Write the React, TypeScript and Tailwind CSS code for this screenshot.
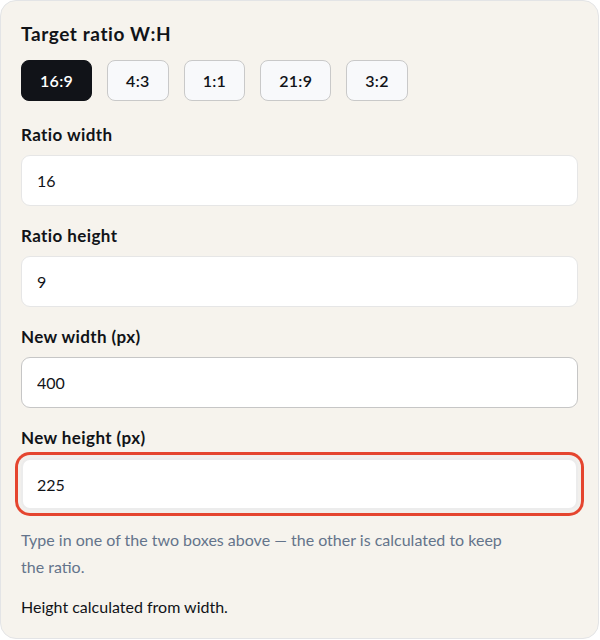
import React, { useState } from 'react';

const ratios = [
  { label: '16:9', w: 16, h: 9 },
  { label: '4:3', w: 4, h: 3 },
  { label: '1:1', w: 1, h: 1 },
  { label: '21:9', w: 21, h: 9 },
  { label: '3:2', w: 3, h: 2 },
];

export default function App() {
  const [active, setActive] = useState('16:9');
  const [rw, setRw] = useState('16');
  const [rh, setRh] = useState('9');
  const [width, setWidth] = useState('400');
  const [height, setHeight] = useState('225');

  const pick = (r: { label: string; w: number; h: number }) => {
    setActive(r.label);
    setRw(String(r.w));
    setRh(String(r.h));
    const w = parseFloat(width);
    if (!isNaN(w)) setHeight(String(Math.round((w * r.h) / r.w)));
  };

  const labelCls = 'block text-[17px] font-bold tracking-[0.4px] mt-[18px] leading-[24px]';

  return (
    <div className="w-[600px] h-[640px] bg-white" style={{ fontFamily: 'Lato, "Noto Sans", sans-serif' }}>
      <div className="h-[639px] w-[599px] bg-[#f6f3ed] border border-[#e3e4e6] rounded-[16px] px-5 pt-[20px] text-[#111318]">
        <h2 className="text-[19px] font-bold tracking-[0.6px] leading-[26px]">Target ratio W:H</h2>
        <div className="flex gap-[15px] mt-[13px]">
          {ratios.map((r) => (
            <button
              key={r.label}
              onClick={() => pick(r)}
              className={`h-[41px] px-[18px] rounded-[8px] text-[16px] font-semibold tracking-[0.3px] border ${
                active === r.label
                  ? 'bg-[#111318] border-[#111318] text-white'
                  : 'bg-[#f8f9fb] border-[#c9c9c9] text-[#111318]'
              }`}
            >
              {r.label}
            </button>
          ))}
        </div>

        <label className="block text-[17px] font-bold tracking-[0.4px] mt-[22px] leading-[24px]">Ratio width</label>
        <input
          value={rw}
          onChange={(e) => setRw(e.target.value)}
          className="mt-[8px] w-full h-[51px] bg-white border border-[#e6e6e6] rounded-[9px] px-[15px] text-[16px] outline-none"
        />

        <label className={labelCls}>Ratio height</label>
        <input
          value={rh}
          onChange={(e) => setRh(e.target.value)}
          className="mt-[8px] w-full h-[51px] bg-white border border-[#e6e6e6] rounded-[9px] px-[15px] text-[16px] outline-none"
        />

        <label className={labelCls}>New width (px)</label>
        <input
          value={width}
          onChange={(e) => setWidth(e.target.value)}
          className="mt-[8px] w-full h-[51px] bg-white border border-[#c6c6c6] rounded-[9px] px-[15px] text-[16px] outline-none"
        />

        <label className={labelCls}>New height (px)</label>
        <input
          value={height}
          onChange={(e) => setHeight(e.target.value)}
          className="mt-[8px] w-full h-[52px] bg-white border-2 border-[#ececec] rounded-[9px] px-[14px] text-[16px] outline-none ring-[3px] ring-[#e5452f] ring-offset-[3px] ring-offset-[#f1efec]"
        />

        <p className="mt-[16px] max-w-[505px] text-[16px] leading-[27px] text-[#64748b]">
          Type in one of the two boxes above — the other is calculated to keep the ratio.
        </p>
        <p className="mt-[15px] text-[16px] leading-[24px]">Height calculated from width.</p>
      </div>
    </div>
  );
}
